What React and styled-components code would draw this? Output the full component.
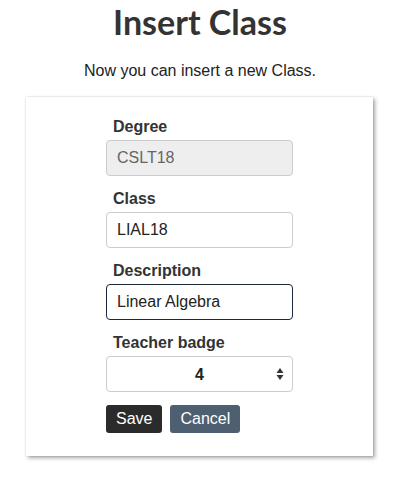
import React, { useEffect, useRef } from "react";
import styled, { createGlobalStyle } from "styled-components";

const GlobalStyle = createGlobalStyle`
  body {
    margin: 0;
    background: #fff;
    font-family: "Liberation Sans", Arial, sans-serif;
    color: #333;
  }
  * {
    box-sizing: border-box;
  }
`;

const Page = styled.div`
  width: 400px;
  min-height: 477px;
  padding-bottom: 16px;
  display: flex;
  flex-direction: column;
  align-items: center;
`;

const Title = styled.h1`
  margin: 2px 0 0;
  font-family: Lato, "Open Sans", sans-serif;
  font-weight: 700;
  font-size: 34px;
  line-height: 40px;
  color: #333;
`;

const Lead = styled.p`
  margin: 19px 0 0;
  font-size: 16px;
  line-height: 20px;
  color: #222;
`;

const Card = styled.form`
  align-self: flex-start;
  margin: 16px 0 0 26px;
  width: 347px;
  padding: 20px 0 23px 80px;
  background: #fff;
  box-shadow: 0 0 1px rgba(0, 0, 0, 0.25), 2px 2px 4px rgba(0, 0, 0, 0.35);
`;

const Field = styled.div`
  display: flex;
  flex-direction: column;
  width: 187px;
  margin-bottom: 13px;
`;

const Label = styled.label`
  margin: 0 0 3px 7px;
  font-weight: 700;
  font-size: 16px;
  line-height: 20px;
  color: #333;
`;

const Input = styled.input`
  height: 36px;
  width: 187px;
  padding: 0 10px;
  font-family: "Liberation Sans", Arial, sans-serif;
  font-size: 16px;
  color: ${(p) => (p.disabled ? "#666" : "#222")};
  background: ${(p) => (p.disabled ? "#eee" : "#fff")};
  border: 1px solid ${(p) => (p.$active ? "#1c2838" : "#ccc")};
  border-radius: 4px;
  outline: none;
  caret-color: #111;
`;

const SelectWrap = styled.div`
  position: relative;
  width: 187px;
  height: 36px;
`;

const Select = styled.select`
  appearance: none;
  width: 100%;
  height: 100%;
  padding: 0 24px;
  font-family: "Liberation Sans", Arial, sans-serif;
  font-size: 16px;
  font-weight: 700;
  color: #222;
  text-align: center;
  text-align-last: center;
  background: #fff;
  border: 1px solid #ccc;
  border-radius: 4px;
  outline: none;
`;

const Arrows = styled.svg`
  position: absolute;
  right: 9px;
  top: 11px;
  pointer-events: none;
`;

const Actions = styled.div`
  display: flex;
  gap: 8px;
  margin-top: 4px;
`;

const Button = styled.button`
  height: 28px;
  padding: 0 10px;
  border: none;
  border-radius: 3px;
  font-family: "Liberation Sans", Arial, sans-serif;
  font-size: 16px;
  color: #fff;
  background: ${(p) => (p.$variant === "primary" ? "#2b2b2b" : "#4e5f72")};
`;

export default function App() {
  const descRef = useRef(null);

  useEffect(() => {
    const el = descRef.current;
    if (el) {
      el.focus();
      el.setSelectionRange(el.value.length, el.value.length);
    }
  }, []);

  return (
    <Page>
      <GlobalStyle />
      <Title>Insert Class</Title>
      <Lead>Now you can insert a new Class.</Lead>
      <Card onSubmit={(e) => e.preventDefault()}>
        <Field>
          <Label>Degree</Label>
          <Input disabled defaultValue="CSLT18" />
        </Field>
        <Field>
          <Label>Class</Label>
          <Input defaultValue="LIAL18" />
        </Field>
        <Field>
          <Label>Description</Label>
          <Input ref={descRef} $active defaultValue="Linear Algebra" />
        </Field>
        <Field>
          <Label>Teacher badge</Label>
          <SelectWrap>
            <Select defaultValue="4">
              <option value="1">1</option>
              <option value="2">2</option>
              <option value="3">3</option>
              <option value="4">4</option>
            </Select>
            <Arrows width="8" height="14" viewBox="0 0 8 14">
              <path d="M4 1 L7.5 6 L0.5 6 Z" fill="#333" />
              <path d="M0.5 8 L7.5 8 L4 13 Z" fill="#333" />
            </Arrows>
          </SelectWrap>
        </Field>
        <Actions>
          <Button type="submit" $variant="primary">Save</Button>
          <Button type="button">Cancel</Button>
        </Actions>
      </Card>
    </Page>
  );
}
